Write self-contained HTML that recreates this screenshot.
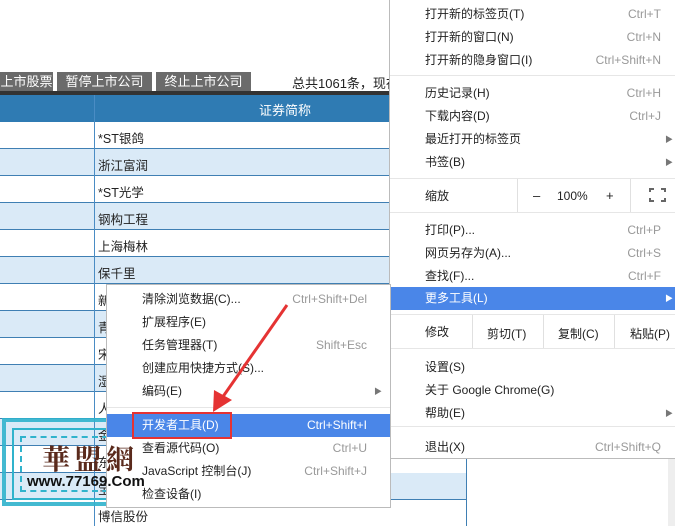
<!DOCTYPE html>
<html><head><meta charset="utf-8"><style>
*{margin:0;padding:0;box-sizing:border-box}
body{width:675px;height:526px;overflow:hidden;position:relative;background:#fff;font-family:"Liberation Sans","Noto Sans CJK SC",sans-serif;font-size:12px;color:#222}
.a{position:absolute;white-space:nowrap}
.tab{position:absolute;top:72px;height:19px;background:#6b6b6b;color:#fff;font-size:13px;line-height:19px;text-align:center}
.row{position:absolute;left:0;width:390px;height:27px;border-bottom:1px solid #3f7fb3}
.row span{position:absolute;left:98px;top:6px;font-size:12.5px}
.mi{position:absolute;left:0;width:100%;height:23px;line-height:23px;font-size:12px;color:#222}
.mi .t{position:absolute;left:35px}
.mi .s{position:absolute;right:14px;color:#999}
.mi .r{position:absolute;right:2px;color:#777;font-size:8px}
.sep{position:absolute;left:0;width:100%;height:1px;background:#e6e6e6}
.hl{background:#4a86e8;color:#fff}
.hl .s{color:#fff}
</style></head><body>
<div class="tab" style="left:0;width:53px">上市股票</div>
<div class="tab" style="left:57px;width:95px">暂停上市公司</div>
<div class="tab" style="left:156px;width:95px">终止上市公司</div>
<div class="a" style="left:292px;top:73px;font-size:13px">总共1061条，现在</div>
<div class="a" style="left:0;top:91px;width:390px;height:4px;background:#333"></div>
<div class="a" style="left:0;top:95px;width:390px;height:27px;background:#2f7bb3"></div>
<div class="a" style="left:259px;top:100px;color:#fff;font-size:13px">证券简称</div>
<div class="row" style="top:122px;background:#fff"><span>*ST银鸽</span></div>
<div class="row" style="top:149px;background:#daeaf7"><span>浙江富润</span></div>
<div class="row" style="top:176px;background:#fff"><span>*ST光学</span></div>
<div class="row" style="top:203px;background:#daeaf7"><span>钢构工程</span></div>
<div class="row" style="top:230px;background:#fff"><span>上海梅林</span></div>
<div class="row" style="top:257px;background:#daeaf7"><span>保千里</span></div>
<div class="row" style="top:284px;background:#fff"><span>新</span></div>
<div class="row" style="top:311px;background:#daeaf7"><span>青</span></div>
<div class="row" style="top:338px;background:#fff"><span>宋</span></div>
<div class="row" style="top:365px;background:#daeaf7"><span>湿</span></div>
<div class="row" style="top:392px;background:#fff"><span>人</span></div>
<div class="row" style="top:419px;background:#daeaf7"><span>金</span></div>
<div class="row" style="top:446px;background:#fff"><span>东</span></div>
<div class="row" style="top:473px;background:#daeaf7;width:467px"><span>宝</span></div>
<div class="row" style="top:500px;background:#fff;width:467px;border:none"><span>博信股份</span></div>
<div class="a" style="left:94px;top:95px;width:1px;height:431px;background:#4a8cc4"></div>
<div class="a" style="left:466px;top:458px;width:1px;height:68px;background:#3f7fb3"></div>
<div class="a" style="left:668px;top:458px;width:7px;height:68px;background:#eee"></div>
<!-- watermark frames (behind submenu) -->
<div class="a" style="left:2px;top:418px;width:170px;height:88px;border:4px solid #30b3cc;opacity:.9"></div>
<div class="a" style="left:12px;top:428px;width:165px;height:72px;border:2px solid #30b3cc"></div>
<div class="a" style="left:20px;top:436px;width:150px;height:56px;border:2px dashed #30b3cc"></div>
<!-- main menu -->
<div class="a" style="left:389px;top:0;width:286px;height:459px;background:#fff;border-left:1px solid #bbb;border-bottom:1px solid #bbb">
 <div class="mi" style="top:3px"><span class="t">打开新的标签页(T)</span><span class="s">Ctrl+T</span></div>
 <div class="mi" style="top:26px"><span class="t">打开新的窗口(N)</span><span class="s">Ctrl+N</span></div>
 <div class="mi" style="top:49px"><span class="t">打开新的隐身窗口(I)</span><span class="s">Ctrl+Shift+N</span></div>
 <div class="sep" style="top:75px"></div>
 <div class="mi" style="top:82px"><span class="t">历史记录(H)</span><span class="s">Ctrl+H</span></div>
 <div class="mi" style="top:105px"><span class="t">下载内容(D)</span><span class="s">Ctrl+J</span></div>
 <div class="mi" style="top:128px"><span class="t">最近打开的标签页</span><span class="r">▶</span></div>
 <div class="mi" style="top:151px"><span class="t">书签(B)</span><span class="r">▶</span></div>
 <div class="sep" style="top:178px"></div>
 <div class="mi" style="top:185px"><span class="t">缩放</span></div>
 <div class="a" style="left:127px;top:179px;width:1px;height:33px;background:#e0e0e0"></div>
 <div class="a" style="left:240px;top:179px;width:1px;height:33px;background:#e0e0e0"></div>
 <div class="a" style="left:143px;top:188px;font-size:13px">–</div>
 <div class="a" style="left:167px;top:189px;font-size:12px">100%</div>
 <div class="a" style="left:216px;top:188px;font-size:13px">+</div>
 <div class="a" style="left:259px;top:188px;width:17px;height:14px;border:2px solid #666"></div>
 <div class="a" style="left:264px;top:186px;width:7px;height:18px;background:#fff"></div>
 <div class="a" style="left:257px;top:192px;width:21px;height:6px;background:#fff"></div>
 <div class="sep" style="top:212px"></div>
 <div class="mi" style="top:219px"><span class="t">打印(P)...</span><span class="s">Ctrl+P</span></div>
 <div class="mi" style="top:242px"><span class="t">网页另存为(A)...</span><span class="s">Ctrl+S</span></div>
 <div class="mi" style="top:265px"><span class="t">查找(F)...</span><span class="s">Ctrl+F</span></div>
 <div class="mi hl" style="top:287px"><span class="t">更多工具(L)</span><span class="r" style="color:#fff">▶</span></div>
 <div class="sep" style="top:314px"></div>
 <div class="mi" style="top:321px"><span class="t">修改</span></div>
 <div class="a" style="left:82px;top:315px;width:1px;height:33px;background:#e0e0e0"></div>
 <div class="a" style="left:153px;top:315px;width:1px;height:33px;background:#e0e0e0"></div>
 <div class="a" style="left:224px;top:315px;width:1px;height:33px;background:#e0e0e0"></div>
 <div class="a" style="left:97px;top:325px">剪切(T)</div>
 <div class="a" style="left:168px;top:325px">复制(C)</div>
 <div class="a" style="left:240px;top:325px">粘贴(P)</div>
 <div class="sep" style="top:348px"></div>
 <div class="mi" style="top:356px"><span class="t">设置(S)</span></div>
 <div class="mi" style="top:379px"><span class="t">关于 Google Chrome(G)</span></div>
 <div class="mi" style="top:402px"><span class="t">帮助(E)</span><span class="r">▶</span></div>
 <div class="sep" style="top:426px"></div>
 <div class="mi" style="top:436px"><span class="t">退出(X)</span><span class="s">Ctrl+Shift+Q</span></div>
</div>
<!-- submenu -->
<div class="a" style="left:106px;top:284px;width:285px;height:224px;background:#fff;border:1px solid #bbb">
 <div class="mi" style="top:3px"><span class="t">清除浏览数据(C)...</span><span class="s" style="right:23px">Ctrl+Shift+Del</span></div>
 <div class="mi" style="top:26px"><span class="t">扩展程序(E)</span></div>
 <div class="mi" style="top:49px"><span class="t">任务管理器(T)</span><span class="s" style="right:23px">Shift+Esc</span></div>
 <div class="mi" style="top:72px"><span class="t">创建应用快捷方式(S)...</span></div>
 <div class="mi" style="top:95px"><span class="t">编码(E)</span><span class="r" style="right:8px">▶</span></div>
 <div class="sep" style="top:122px"></div>
 <div class="mi hl" style="top:129px"><span class="t">开发者工具(D)</span><span class="s" style="right:23px">Ctrl+Shift+I</span></div>
 <div class="mi" style="top:152px"><span class="t">查看源代码(O)</span><span class="s" style="right:23px">Ctrl+U</span></div>
 <div class="mi" style="top:175px"><span class="t">JavaScript 控制台(J)</span><span class="s" style="right:23px">Ctrl+Shift+J</span></div>
 <div class="mi" style="top:198px"><span class="t">检查设备(I)</span></div>
</div>
<div class="a" style="left:132px;top:412px;width:100px;height:27px;border:2px solid #e53333"></div>
<svg class="a" style="left:0;top:0" width="675" height="526">
 <line x1="287" y1="305" x2="222" y2="398" stroke="#e53333" stroke-width="3"/>
 <polygon points="213,412 214,390 232,400" fill="#e53333"/>
</svg>
<!-- watermark text -->
<div class="a" style="left:42px;top:438px;font-size:28px;color:#5a2a1c;font-weight:bold;letter-spacing:4px;font-family:'Noto Serif CJK SC','Noto Sans CJK TC',serif">華盟網</div>
<div class="a" style="left:27px;top:473px;font-size:15px;font-weight:bold;color:#111">www.77169.Com</div>
</body></html>
